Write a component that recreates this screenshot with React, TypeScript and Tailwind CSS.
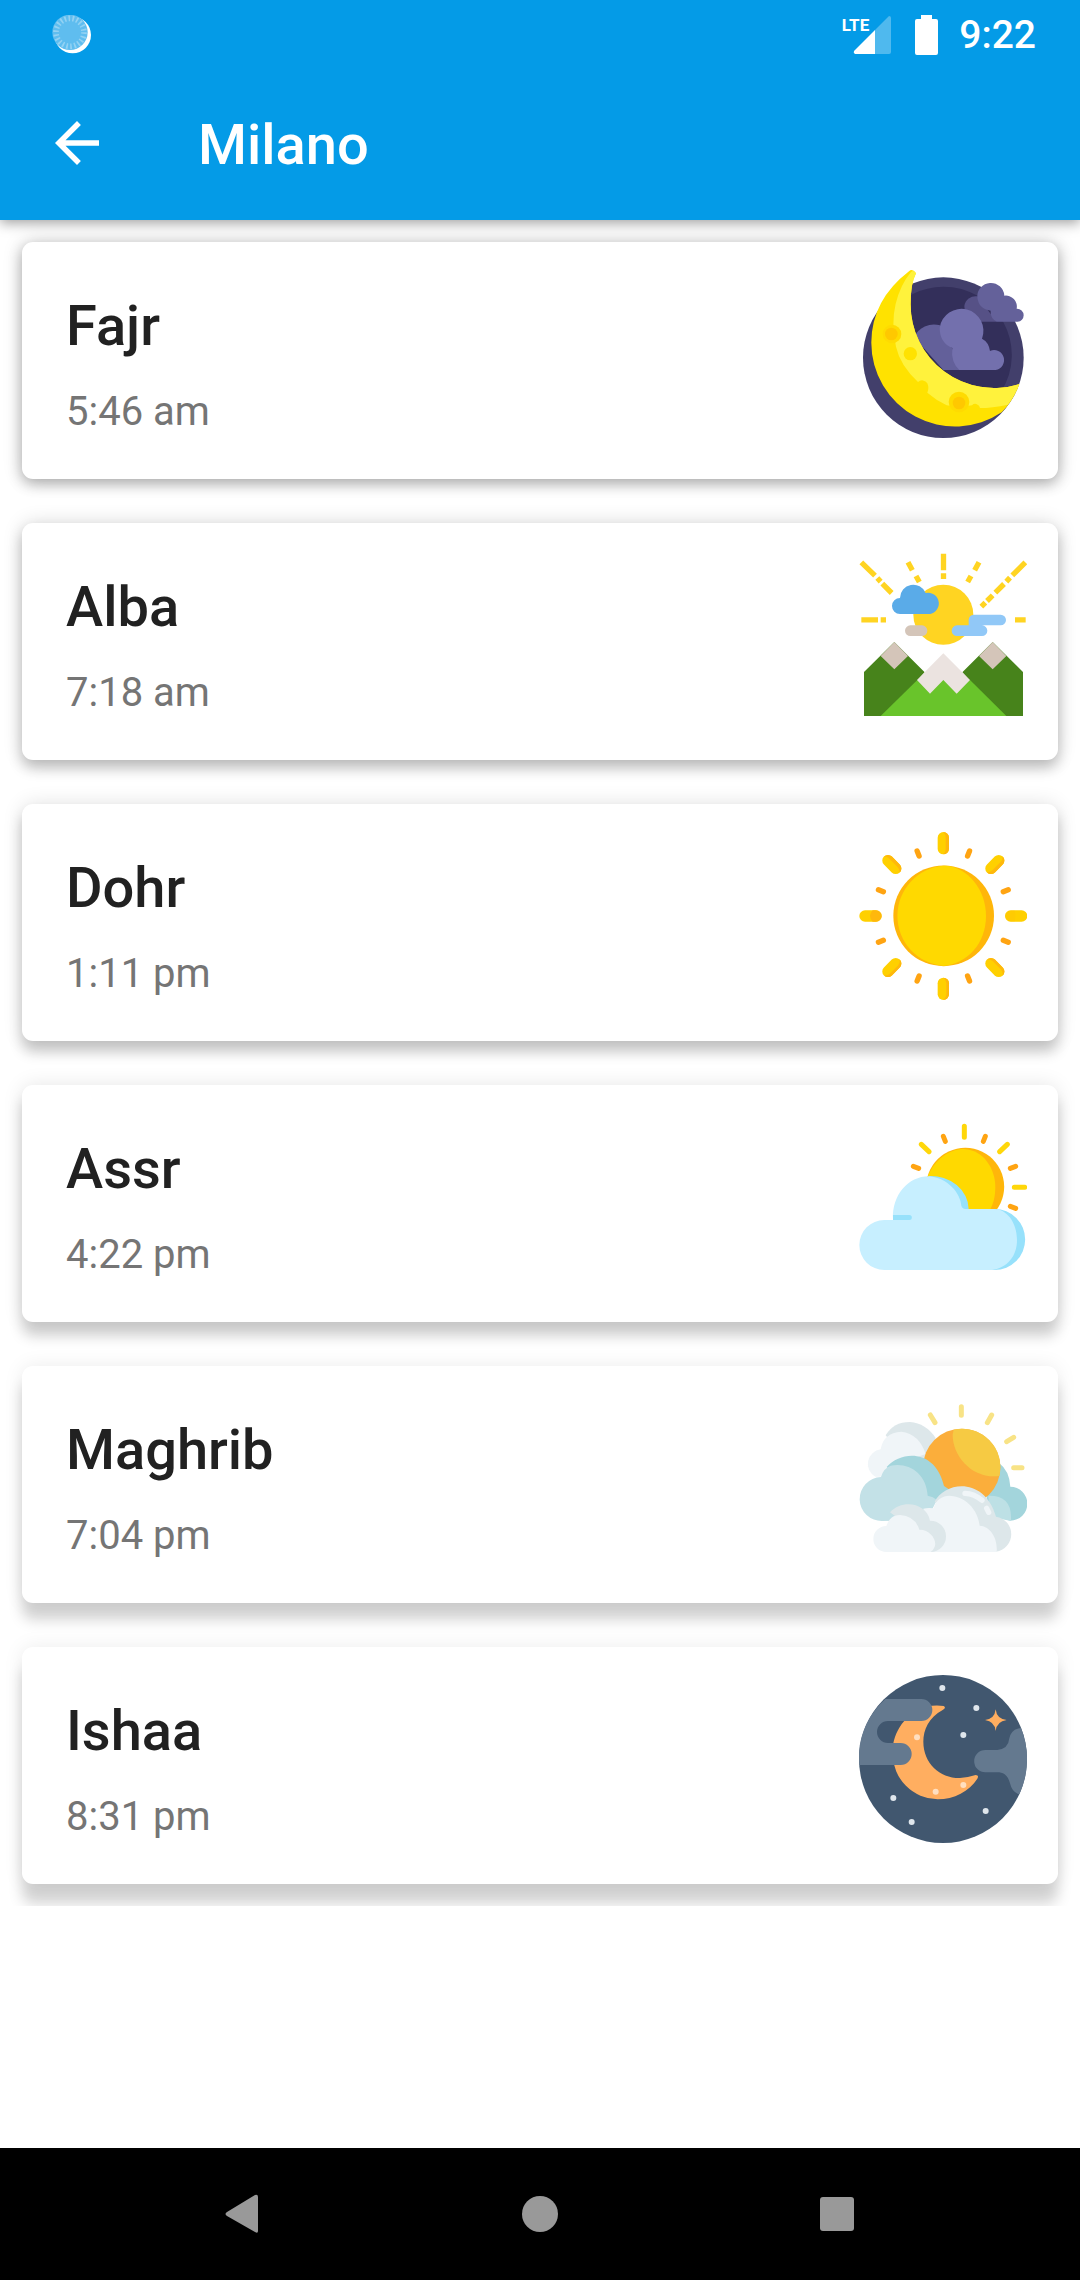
import type { ReactNode } from 'react';

function FajrIcon() {
  return (
    <svg viewBox="57 60 504 504" className="size-[168px]" aria-hidden="true">
      <circle cx="310" cy="323" r="241" fill="#423f6b" />
      <path d="M310 110A205 205 0 0 1 484 424L260 410L150 190Q210 112 310 110Z" fill="#332f5a" />
      <path d="M373 168A34 34 0 0 1 412 139L470 215H395Q373 200 373 168Z" fill="#565186" />
      <path d="M412 142A40 40 0 0 1 493 137A33 33 0 0 1 530 176A20 20 0 0 1 551 196A19 19 0 0 1 533 215H470Q450 205 452 182Q416 178 412 142Z" fill="#64619a" />
      <path d="M222 262A66 66 0 0 1 300 226L370 360H310Z" fill="#63609a" />
      <path d="M299 233A66 66 0 1 1 426 266Q446 276 450 303A30 30 0 1 1 467 360H358Q332 336 337 294Q299 278 299 233Z" fill="#7370ad" />
      <path d="M207 64Q217 54 228 70Q212 100 212 160A250 250 0 0 0 538 402Q520 452 485 487A251 251 0 0 1 94 277Q95 150 207 64Z" fill="#ffe200" />
      <path d="M213 66Q221 58 228 70Q212 100 212 160A250 250 0 0 0 538 402Q526 436 504 464Q455 474 420 474A14 14 0 0 0 396 466Q355 474 320 466Q290 452 262 428Q268 414 262 400A18 18 0 0 0 234 396Q180 345 168 290Q146 190 186 108Q195 88 213 66Z" fill="#fff23c" />
      <circle cx="156" cy="252" r="28" fill="#ffdb00" />
      <circle cx="154" cy="252" r="19" fill="#ffc800" />
      <circle cx="211" cy="311" r="20" fill="#ffe200" />
      <circle cx="357" cy="456" r="31" fill="#ffdb00" />
      <circle cx="357" cy="459" r="19" fill="#ffc800" />
    </svg>
  );
}

function AlbaIcon() {
  return (
    <svg viewBox="57 63 504 504" className="size-[168px]" aria-hidden="true">
      <g stroke="#ffd422" strokeWidth="16" fill="none">
        <path d="M310.500 71V121M310.500 130V147M64 97L105 137M112 144L122 155M127 161L155 189M556 97L517 136M510 143L499 155M492 162L466 188M458 196L441 213M436 218L424 230M204 97L217 121M228 138L238 156M417 97L404 121M393 138L383 156" />
        <path d="M64 269.500H114M122 269.500H138M525 269.500H557" />
      </g>
      <circle cx="310" cy="254" r="90" fill="#ffd422" />
      <path d="M180 252A24 24 0 0 1 180 204A40 40 0 0 1 257 189A32 32 0 1 1 262 252Z" fill="#5aabe8" />
      <rect x="195" y="286" width="67" height="32" rx="16" fill="#d4c5b9" />
      <path d="M401 254H482A16 16 0 0 1 482 286H426A16 16 0 0 1 426 318H351A16 16 0 0 1 351 286H386V270A16 16 0 0 1 401 254Z" fill="#91c8f7" />
      <path d="M72 426L163 336L254 427L232 452L240 558H72ZM549 426L458 336L367 427L390 452L380 558H549Z" fill="#47831b" />
      <path d="M122 378L163 336L204 378L163 418ZM417 378L458 336L499 378L458 418Z" fill="#d4c5b9" />
      <path d="M122 558L232 450L310 440L390 450L499 558Z" fill="#69c42b" />
      <path d="M310 370L390 450L350 491L310 450L270 491L231 450Z" fill="#ebe3e0" />
    </svg>
  );
}

const longRays = [0, 45, 90, 135, 180, 225, 270, 315];
const shortRays = [22, 68, 112, 158, 202, 248, 292, 338];

function shadeFor(angle: number) {
  if (angle === 90) return 'M293 104V116A17 17 0 0 0 327 116V104Q310 100 293 104Z';
  if (angle === 270) return 'M293 106V116A17 17 0 0 0 327 116V106Q310 90 293 106Z';
  if (angle > 90 && angle < 270)
    return 'M310 66A17 17 0 0 0 293 83V116A17 17 0 0 0 310 133Q301 126 301 116V83Q301 73 310 66Z';
  return 'M310 66A17 17 0 0 1 327 83V116A17 17 0 0 1 310 133Q317 126 317 116V83Q317 73 310 66Z';
}

function DohrIcon() {
  return (
    <svg viewBox="57 66 504 504" className="size-[168px]" aria-hidden="true">
      {longRays.map((a) => (
        <g key={a} transform={`rotate(${a} 310 318)`}>
          <rect x="293" y="66" width="34" height="67" rx="17" fill="#ffd000" />
          <path d={shadeFor(a)} fill="#ffb80c" opacity={a === 90 ? 0.2 : 1} />
        </g>
      ))}
      {shortRays.map((a) => (
        <rect key={a} x="302" y="100" width="16" height="32" rx="8" fill="#ffa412" transform={`rotate(${a} 310 318)`} />
      ))}
      <circle cx="311" cy="317.500" r="151" fill="#ffb60a" />
      <path d="M311 167A151 151 0 0 0 311 468C382 461 438 400 438 318C438 236 382 173 318 167Z" fill="#ffd900" />
    </svg>
  );
}

function AssrIcon() {
  return (
    <svg viewBox="57 39 504 504" className="size-[168px]" aria-hidden="true">
      <g strokeWidth="15" strokeLinecap="round" fill="none">
        <path d="M373 79V112M244 133L267 155M502 133L479 155M523 262H554" stroke="#ffd70a" />
        <path d="M310 109L316 124M436 109L430 124M220 199L236 205M527 199L511 205M511 319L527 325" stroke="#ffa412" />
      </g>
      <path d="M262 232A117 117 0 1 1 468 332H340Z" fill="#ffb60a" />
      <path d="M262 232C284 178 327 147 372 147C430 150 466 205 466 262Q466 302 449 332H340Z" fill="#ffd900" />
      <path d="M266 228A114 100 0 0 1 386 327H464A91 91 0 0 1 464 510H400L340 327Z" fill="#97e1fb" />
      <path d="M133 510A75 75 0 0 1 133 360H159C155 285 205 229 266 229C325 234 361 280 364 317Q366 326 376 327H462C500 327 531 367 531 420C531 468 503 503 456 510Z" fill="#c7efff" />
      <path d="M159 360V345H208A7 7 0 0 1 208 360Z" fill="#97e1fb" />
    </svg>
  );
}

function MaghribIcon() {
  return (
    <svg viewBox="57 42 504 504" className="size-[168px]" aria-hidden="true">
      <path d="M364 80V106M271 105L285 128M455 105L442 128M521 172L500 185M521 263H546" stroke="#f8e386" strokeWidth="15" strokeLinecap="round" />
      <path d="M137 166Q160 126 210 126Q258 130 287 174L250 240L190 230Z" fill="#dde7ea" />
      <path d="M106 290A44 44 0 0 1 122 208Q130 158 184 155Q238 162 257 222L180 250L130 290Z" fill="#f0f5f8" />
      <path d="M478 250Q508 272 511 320A51 51 0 0 1 511 422L440 400V300Z" fill="#a3d5dc" />
      <path d="M445 347Q512 345 513 410V423L450 410Z" fill="#bde0e5" />
      <circle cx="365" cy="262" r="116" fill="#fbae3b" />
      <path d="M341 149A115 115 0 0 1 478 288C398 298 338 230 338 164Z" fill="#f6ca43" />
      <path d="M140 261C185 212 285 206 312 318L330 330L290 365L230 350Z" fill="#a3d5dc" />
      <path d="M127 423A66 66 0 1 1 123 291Q130 265 152 257C205 245 260 280 263 347Q280 350 291 360L260 420Z" fill="#c3e1e7" />
      <path d="M284 365C316 303 434 290 468 410A53 53 0 0 1 468 515H420L360 400Z" fill="#dde7ea" />
      <path d="M250 386Q264 382 281 385C286 358 310 347 327 347C375 348 414 388 419 437C450 438 474 474 470 516H250Z" fill="#f0f5f8" />
      <path d="M375 340Q403 341 426 361M440 385L446 397" stroke="#f0f5f8" strokeWidth="16" strokeLinecap="round" fill="none" />
      <path d="M150 397C188 356 260 370 270 422A47 47 0 0 1 272 516L220 450Z" fill="#dde7ea" />
      <path d="M139 516A38 38 0 0 1 139 438C147 416 159 405 180 405Q225 408 238 449C270 448 292 480 284 500Q281 509 272 516Z" fill="#f0f5f8" />
    </svg>
  );
}

const stars = [
  [307, 114], [409, 174], [370, 255], [160, 444], [215, 516], [437, 483],
];
const moonStars = [
  [231, 262], [287, 425], [370, 405],
];

function IshaaIcon() {
  return (
    <svg viewBox="57 75 504 504" className="size-[168px]" aria-hidden="true">
      <circle cx="309" cy="327" r="252" fill="#41576f" />
      <path d="M260 169Q290 164 311 168Q320 172 308 180C266 202 250 240 250 275C250 340 300 385 360 384Q384 382 407 375Q418 375 412 386C388 424 342 448 293 448A137 137 0 0 1 158 312C155 250 195 190 260 169Z" fill="#ffae60" />
      <path d="M136 147H244A33 33 0 0 1 244 213H144A33 33 0 0 0 144 279H182A33 33 0 0 1 182 345H58C50 270 80 197 136 147Z" fill="#64798f" />
      <path d="M543 234A252 252 0 0 1 538 433Q516 427 510 400C504 377 492 367 472 367H436A33 33 0 0 1 436 300H472Q505 297 508 265Q514 237 543 234Z" fill="#64798f" />
      <path d="M467 178Q470 207 500 210Q470 214 467 243Q464 214 435 210Q464 207 467 178Z" fill="#ffae60" />
      {stars.map(([x, y]) => (
        <circle key={`${x}-${y}`} cx={x} cy={y} r="9" fill="#dfe6ec" />
      ))}
      {moonStars.map(([x, y]) => (
        <circle key={`${x}-${y}`} cx={x} cy={y} r="9" fill="#ffdfc0" />
      ))}
    </svg>
  );
}

interface Prayer {
  name: string;
  time: string;
  icon: ReactNode;
  shadow: string;
}

const prayers: Prayer[] = [
  { name: 'Fajr', time: '5:46 am', icon: <FajrIcon />, shadow: 'shadow-[0_5px_14px_rgba(0,0,0,0.26),0_0_20px_rgba(0,0,0,0.16)]' },
  { name: 'Alba', time: '7:18 am', icon: <AlbaIcon />, shadow: 'shadow-[0_8px_14px_rgba(0,0,0,0.22),0_0_20px_rgba(0,0,0,0.14)]' },
  { name: 'Dohr', time: '1:11 pm', icon: <DohrIcon />, shadow: 'shadow-[0_11px_14px_rgba(0,0,0,0.20),0_0_20px_rgba(0,0,0,0.12)]' },
  { name: 'Assr', time: '4:22 pm', icon: <AssrIcon />, shadow: 'shadow-[0_14px_14px_rgba(0,0,0,0.18),0_0_20px_rgba(0,0,0,0.10)]' },
  { name: 'Maghrib', time: '7:04 pm', icon: <MaghribIcon />, shadow: 'shadow-[0_17px_14px_rgba(0,0,0,0.17),0_0_20px_rgba(0,0,0,0.08)]' },
  { name: 'Ishaa', time: '8:31 pm', icon: <IshaaIcon />, shadow: 'shadow-[0_20px_14px_rgba(0,0,0,0.17),0_0_20px_rgba(0,0,0,0.08)]' },
];

function StatusBar() {
  return (
    <div className="flex h-[66px] items-center justify-between pt-1 pl-[52px] pr-11">
      <svg viewBox="0 0 120 120" className="size-10" aria-hidden="true">
        <circle cx="62" cy="60" r="55" fill="#fff" />
        <circle cx="54" cy="52" r="53" fill="#5fbdef" />
        <circle cx="54" cy="52" r="42" fill="none" stroke="#93d2f3" strokeWidth="17" strokeDasharray="5 7" />
      </svg>
      <div className="flex items-center">
        <div className="flex items-start">
          <span className="text-[17px] leading-[18px] font-bold">LTE</span>
          <svg viewBox="0 0 38 38" className="-ml-4 size-[38px]" aria-hidden="true">
            <path d="M36 0Q38 0 38 2V36Q38 38 36 38H22V14L35 1Z" fill="#fff" opacity="0.3" />
            <path d="M22 14V38H2Q0 37 1 35Z" fill="#fff" />
          </svg>
        </div>
        <svg viewBox="0 0 24 40" className="ml-6 h-10 w-6" aria-hidden="true">
          <path d="M6 0H17V4H21Q23 4 23 6V38Q23 40 21 40H2Q0 40 0 38V6Q0 4 2 4H6Z" fill="#fff" />
        </svg>
        <time className="ml-5 text-[39px] leading-[48px] font-medium">9:22</time>
      </div>
    </div>
  );
}

function PrayerCard({ prayer }: { prayer: Prayer }) {
  return (
    <li className={`flex items-start justify-between rounded-[11px] bg-white pr-[31px] pl-11 ${prayer.shadow}`}>
      <div className="flex flex-col gap-[30px] pt-[52px] pb-[43px]">
        <h2 className="text-[56px] leading-[64px] font-medium text-[#212121]">{prayer.name}</h2>
        <p className="text-[40px] leading-[48px] text-[#757575]">{prayer.time}</p>
      </div>
      <div className="pt-7">{prayer.icon}</div>
    </li>
  );
}

export default function App() {
  return (
    <div className="flex min-h-screen flex-col bg-white font-['Roboto',sans-serif]">
      <header className="relative z-10 bg-[#049be7] text-white shadow-[0_3px_12px_rgba(0,0,0,0.38)]">
        <StatusBar />
        <div className="flex h-[154px] items-center pl-11">
          <button type="button" aria-label="Back">
            <svg viewBox="0 0 24 24" className="size-[66px]" fill="currentColor" aria-hidden="true">
              <path d="M20 11H7.830l5.590-5.590L12 4l-8 8 8 8 1.410-1.410L7.830 13H20v-2z" />
            </svg>
          </button>
          <h1 className="ml-22 pt-1 text-[56px] leading-[64px] font-medium">Milano</h1>
        </div>
      </header>
      <main>
        <ul className="flex flex-col gap-11 overflow-hidden p-[22px]">
          {prayers.map((p) => (
            <PrayerCard key={p.name} prayer={p} />
          ))}
        </ul>
      </main>
      <nav className="mt-auto flex h-33 items-center justify-around bg-black px-[94px] text-[#999999]">
        <button type="button" aria-label="Back" className="flex size-24 items-center justify-center">
          <svg viewBox="0 0 40 40" className="size-10" fill="currentColor" aria-hidden="true">
            <path d="M32 1Q35 0 35 3V37Q35 40 32 38L4 22Q1 20 4 18Z" />
          </svg>
        </button>
        <button type="button" aria-label="Home" className="flex size-24 items-center justify-center">
          <svg viewBox="0 0 40 40" className="size-10" fill="currentColor" aria-hidden="true">
            <circle cx="20" cy="20" r="18" />
          </svg>
        </button>
        <button type="button" aria-label="Recent apps" className="flex size-24 items-center justify-center">
          <svg viewBox="0 0 40 40" className="size-10" fill="currentColor" aria-hidden="true">
            <rect x="3" y="3" width="34" height="34" rx="3" />
          </svg>
        </button>
      </nav>
    </div>
  );
}
